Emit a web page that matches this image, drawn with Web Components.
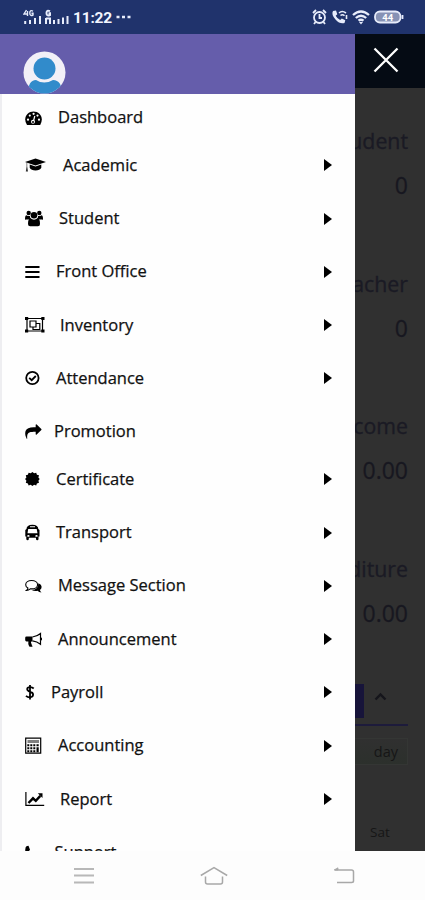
<!DOCTYPE html>
<html lang="en">
<head>
<meta charset="utf-8">
<title>School Menu</title>
<style>
    body {
        margin: 0;
        width: 425px;
        height: 900px;
        overflow: hidden;
        font-family: "Open Sans", "Noto Sans", sans-serif;
    }
</style>
</head>
<body>
<school-app></school-app>

<script>
const icons = {
    dashboard: [17, 16, `<path d="M2 15Q.2 12 .2 9.5C.2 4.6 4 1.4 8.5 1.4s8.3 3.2 8.3 8.1q0 2.7-1.6 5.5z"/><g fill="#fff"><circle cx="3" cy="9.7" r="1.1"/><circle cx="4.8" cy="5.6" r="1.1"/><circle cx="8.6" cy="3.8" r="1.1"/><circle cx="12.5" cy="5.6" r="1.1"/><circle cx="14" cy="9.7" r="1.1"/><circle cx="8" cy="11.8" r="2"/></g><path d="M9.8 6l-1.6 6" stroke="#fff" stroke-width="1.2"/><circle cx="8" cy="12" r="1"/>`],
    academic: [21, 16, `<path d="M10.5 1.5L21 5 10.5 8.5 0 5z"/><path d="M4.7 7.5l5.8 2 5.8-2v3.3q-1.5 2.6-5.8 2.6t-5.8-2.6z"/><path d="M2.2 5.5v4l.8 5H.8l.8-5v-4z" opacity=".8"/>`],
    student: [18, 17, `<circle cx="3.7" cy="3" r="2.2"/><circle cx="14.3" cy="3" r="2.2"/><circle cx="9" cy="5.2" r="3.3"/><path d="M0 9Q0 5.5 1.5 5.2q2 1.2 3.4.8Q5 8 6 9l-2.5.4H1.2Q0 10 0 9zM18 9q0-3.5-1.5-3.8-2 1.2-3.4.8Q13 8 12 9l2.5.4h2.3Q18 10 18 9z"/><path d="M3 14q0-5.5 2.5-5.7Q9 11 12.5 8.3 15 8.500 15 14q0 2.300-2 2.300H5.200Q3 16.300 3 14z"/>`],
    bars: [15, 14, `<path d="M.3 1h14.200v2H.3zm0 5h14.200v2H.3zm0 5h14.200v2H.3z"/>`],
    inventory: [20, 18, `<g fill="none" stroke="#000" stroke-width="1.200"><path d="M2 2.500h15.500v12.500H2z"/><path d="M5 5h6v6H5zM11 7.500h3.800v6H8V11"/></g><path d="M0 1h3.200v3H0zm16.300 0h3.200v3h-3.200zM0 13.500h3.200v3H0zm16.300 0h3.200v3h-3.200z"/>`],
    attendance: [15, 16, `<g fill="none" stroke="#000" stroke-width="1.800"><circle cx="7.400" cy="8" r="6.200"/><path d="M4.200 7.800l2.500 2.400 4.100-4.200"/></g>`],
    promotion: [17, 16, `<path transform="translate(.2 -.3) scale(.0091)" d="M1792 640q0 26-19 45l-512 512q-19 19-45 19t-45-19-19-45v-256h-224q-98 0-175.500 6t-154 21.500-133 42.500-105.500 69.500-80 101-48.500 138.500-17.500 181q0 55 5 123 0 6 2.500 23.500t2.500 26.500q0 15-8.500 25t-23.500 10q-16 0-28-17-7-9-13-22t-13.500-30-10.500-24q-127-285-127-451 0-199 53-333 162-403 875-403h224v-256q0-26 19-45t45-19 45 19l512 512q19 19 19 45z"/>`],
    certificate: [15, 16, `<path d="M7.400 1l1.700 1.300 2.100-.6.700 2 2.100.6-.6 2.100L14.700 8l-1.300 1.700.6 2.100-2.100.600-.700 2-2.100-.600L7.400 15l-1.700-1.200-2.100.6-.700-2-2.100-.600.600-2.100L.1 8l1.300-1.600-.600-2.100 2.100-.600.700-2 2.100.600z"/>`],
    bus: [15, 17, `<path fill-rule="evenodd" d="M1.500 5Q1.500 1 7.400.8q5.900.2 5.900 4.200l1.200 1v6.500h-1V15q0 1.200-1.200 1.200T11 15v-1.200H3.800V15q0 1.200-1.200 1.200T1.300 15v-2.500h-1V6zM5 2.300v1h5v-1zM3.200 5L2.500 9.300h10L11.700 5zM3.400 11q-1.200 0-1.200.9t1.200.9 1.200-.9-1.200-.9zm8.100 0q-1.200 0-1.200.9t1.200.9 1.200-.9-1.200-.9z"/>`],
    message: [17, 16, `<path d="M6.600 2.500c3.300 0 6 1.700 6 4.200s-2.700 4.200-6 4.200l-1.300-.1q-1.700 1.500-3.800 1.600 1.300-1 1.400-2.300Q.7 8.900.7 6.700c0-2.500 2.600-4.200 5.900-4.200z" fill="none" stroke="#000" stroke-width="1.100"/><path d="M13.300 5.200q3.300 1.300 3.300 3.800 0 1.800-1.700 3 .2 1.300 1.600 2.400-2.500 0-4-1.600-3.300.6-5.800-.8 6.900-.3 6.600-6.800z"/>`],
    announcement: [17, 17, `<path d="M1.500 5.400h6v5H6.200q-.7 1.500.5 2.700-.600.900 1 2.200-1.300 1-3.500.1-1.400-3-.8-5H1.500Q.200 10.400.200 9V6.800q0-1.400 1.300-1.400z"/><path d="M7.500 6q4.500-.5 8-3.500v10.800q-3.500-3-8-3.500M15.300 6.500q1.200.2 1.200 1.400t-1.200 1.500" fill="none" stroke="#000" stroke-width="1.200"/>`],
    dollar: [11, 17, `<path d="M8.700 4.500Q7.200 3 5 3.100 2.300 3.200 2.200 5q0 1.800 2.800 2.700 3.200 1 3.100 3.100-.2 2.400-3.200 2.500-2.400 0-3.900-1.500M5 1v14.500" fill="none" stroke="#000" stroke-width="1.800"/>`],
    calculator: [17, 18, `<path d="M.7 1.200h15v15H.7z" fill="none" stroke="#000" stroke-width="1.200"/><path d="M2.500 3h11.500v3H2.500z" opacity=".5"/><path d="M2.300 7.200h2v2h-2zm3 0h2v2h-2zm3 0h2v2h-2zm3.200 0h2.200v2h-2.200zm-9.200 3h2v2h-2zm3 0h2v2h-2zm3 0h2v2h-2zm3.200 0h2.200v5h-2.200zm-9.200 3h2v2h-2zm3 0h2v2h-2zm3 0h2v2h-2z"/>`],
    chart: [20, 16, `<path d="M.900 1v13.400h18.300" fill="none" stroke="#000" stroke-width="1.200"/><path d="M3.500 12L8 7.300l2.800 2.600 4.500-5" fill="none" stroke="#000" stroke-width="2.400"/><path d="M12.800 2.200h4.700V7z"/>`],
    phone: [14, 15, `<path d="M3.500.8l1.500 4-1.300 1.600q1.500 3.200 4.600 4.700L10 9.200l3.700 2q-.3 3.100-3.200 3.100Q6.500 14 3 10.300T.4 4Q.3 1 3.500.8z"/>`]
};

const svg = (name) => {
    const [w, h, body] = icons[name];
    return `<svg width="${w}" height="${h}" viewBox="0 0 ${w} ${h}">${body}</svg>`;
};

class StatusBar extends HTMLElement {
    connectedCallback() {
        this.attachShadow({ mode: 'open' }).innerHTML = `
            <style>
                :host {
                    display: flex;
                    align-items: center;
                    box-sizing: border-box;
                    height: 34px;
                    padding: 0 21px 0 23px;
                    background: #20336c;
                    color: #f3f6ff;
                    font: 700 15.500px Roboto, sans-serif;
                }
                svg { display: block; fill: none; stroke: #e7ecfb; }
                .time { margin: 1px 4px 0 4px; letter-spacing: -.2px; }
                .right { display: flex; align-items: center; gap: 4px; margin-left: auto; }
            </style>
            <svg width="46" height="16" viewBox="0 0 46 16" stroke-width="2">
                <path d="M3.500 1L1 5h4M4.500 2v5" stroke-width="1.400"/>
                <path d="M10 2.200Q6.800.5 6.800 4T10 6V4.200H8.500" stroke-width="1.400"/>
                <path d="M2.200 12v3M7 11v4M12 9v6M17 7v8"/>
                <path d="M27 2.200Q23.500.5 23.500 4T27 6V4.200h-1.500M23 9.500h5M23 15V9M27 15v-5M31 11v4M35.500 10v5M40 8.500V15M44.500 7v8"/>
            </svg>
            <span class="time">11:22</span>
            <svg width="15" height="4" viewBox="0 0 15 4"><path d="M.5 2h3M6 2h3M11.500 2h3" stroke-width="2.400"/></svg>
            <div class="right">
                <svg width="15" height="16" viewBox="0 0 15 16" stroke-width="1.800"><circle cx="7.500" cy="8.500" r="5.500"/><path d="M7.500 5v4H10M1 4l3-3M14 4l-3-3M3.500 13L2 15M11.500 13l1.500 2"/></svg>
                <svg width="17" height="16" viewBox="0 0 17 16"><path d="M2 2l3-.5 1.300 3.700-1.600 1.500q1.500 3 4.500 4.300l1.600-1.500 3.500 1.700-.8 2.800Q9 15.500 4.500 10.500T2 2z" fill="#e7ecfb" stroke="none"/><path d="M8 4q3-3 7 0M9.500 6.500q2-1.700 4 .3M15.500 6v4" stroke-width="1.600"/></svg>
                <svg width="18" height="15" viewBox="0 0 18 15" stroke-width="2.300"><path d="M1 5q8-7 16 0M3.800 8q5.200-4.500 10.400 0M6.500 10.700q2.500-2 5 0"/><path d="M7 12h4l-2 2.500z" fill="#e7ecfb" stroke="none"/></svg>
                <svg width="30" height="14" viewBox="0 0 30 14"><rect x="1" y="1.500" width="25.500" height="11" rx="5" fill="#8792b5" stroke-width="1.800"/><path d="M28.500 5v4" stroke-width="1.800"/><text x="13.800" y="10.500" text-anchor="middle" font-family="Roboto" font-size="9.500" font-weight="700" fill="#fff" stroke="none">44</text></svg>
            </div>
        `;
    }
}

class MenuItem extends HTMLElement {
    connectedCallback() {
        // data-lead is the width of the icon column, it differs from row to row
        this.attachShadow({ mode: 'open' }).innerHTML = `
            <style>
                :host {
                    display: flex;
                    align-items: center;
                    flex: none;
                    box-sizing: border-box;
                    height: 47.500px;
                    padding: 0 23px 0 25px;
                    color: #111;
                    font-size: 16.500px;
                    white-space: nowrap;
                    -webkit-text-stroke: .25px #111;
                }
                :host([data-sub]) { margin-bottom: 5.800px; }
                .icon { flex: none; width: ${this.dataset.lead}px; }
                .label { padding-bottom: 2px; }
                svg { display: block; }
                .arrow {
                    margin-left: auto;
                    border-left: 8px solid #000;
                    border-top: 6.500px solid transparent;
                    border-bottom: 6.500px solid transparent;
                }
            </style>
            <span class="icon">${svg(this.dataset.icon)}</span>
            <span class="label"><slot></slot></span>
            ${this.hasAttribute('data-sub') ? '<span class="arrow"></span>' : ''}
        `;
    }
}

class SideDrawer extends HTMLElement {
    connectedCallback() {
        this.attachShadow({ mode: 'open' }).innerHTML = `
            <style>
                :host {
                    display: flex;
                    flex-direction: column;
                    box-sizing: border-box;
                    background: #fefefe;
                    overflow: hidden;
                }
                header {
                    flex: none;
                    height: 60px;
                    box-sizing: border-box;
                    padding: 17px 0 0 23px;
                    background: #655dab;
                    overflow: hidden;
                }
                header svg { display: block; }
                nav {
                    display: flex;
                    flex: 1;
                    flex-direction: column;
                    min-height: 0;
                    border-left: 2px solid #eeeef1;
                    overflow: hidden;
                }
                ::slotted(menu-item) { margin-left: -2px; }
            </style>
            <header>
                <svg width="43" height="43" viewBox="0 0 43 43">
                    <clipPath id="round"><circle cx="21.500" cy="21.500" r="21"/></clipPath>
                    <g clip-path="url(#round)">
                        <path d="M0 0h43v43H0z" fill="#f2f0f7"/>
                        <path d="M5 43q0-14 8-14 8 5 17 0 9 0 9 14z" fill="#318bcb"/>
                        <circle cx="21.500" cy="17.500" r="13.500" fill="#f2f0f7"/>
                        <circle cx="21.500" cy="17.500" r="11" fill="#318bcb"/>
                    </g>
                </svg>
            </header>
            <nav><slot></slot></nav>
        `;
    }
}

class StatCard extends HTMLElement {
    connectedCallback() {
        this.attachShadow({ mode: 'open' }).innerHTML = `
            <style>
                :host {
                    display: flex;
                    flex: none;
                    flex-direction: column;
                    align-items: flex-end;
                    height: 142.700px;
                    color: #1a1a24;
                    font-size: 21.300px;
                    line-height: 44px;
                    -webkit-text-stroke: .3px #1a1a24;
                }
                .value { font-size: 23px; color: #17171f; }
            </style>
            <slot></slot>
            <span class="value">${this.dataset.value}</span>
        `;
    }
}

class DimmedPage extends HTMLElement {
    connectedCallback() {
        this.attachShadow({ mode: 'open' }).innerHTML = `
            <style>
                :host {
                    display: flex;
                    flex-direction: column;
                    background: #303030;
                    overflow: hidden;
                    white-space: nowrap;
                }
                .top {
                    display: flex;
                    flex: none;
                    justify-content: center;
                    align-items: center;
                    height: 54px;
                    box-sizing: border-box;
                    padding: 0 8px 2px 0;
                    background: #050b14;
                }
                .cards {
                    display: flex;
                    flex-direction: column;
                    align-items: flex-end;
                    flex: none;
                    height: 596px;
                    box-sizing: border-box;
                    padding: 31px 17px 0 0;
                }
                .panel {
                    display: flex;
                    flex: none;
                    height: 42px;
                    box-sizing: border-box;
                    margin-right: 17px;
                    border-bottom: 2px solid #1d1b3b;
                }
                .tab { width: 9px; height: 34px; background: #17143a; }
                .panel svg { margin: 8px 0 0 10px; }
                .day {
                    flex: none;
                    height: 27px;
                    margin: 12px 17px 0 0;
                    padding-right: 9px;
                    box-sizing: border-box;
                    border: 1px solid #343634;
                    border-left: 0;
                    background: linear-gradient(#303030, #2c302c);
                    color: #161616;
                    font-size: 14.500px;
                    line-height: 25px;
                    text-align: right;
                }
                .sat { margin: 57px 0 0 15px; color: #161616; font-size: 13.500px; line-height: 20px; }
            </style>
            <div class="top">
                <svg width="26" height="26" viewBox="0 0 26 26"><path d="M1.500 1.500l23 23M24.500 1.500l-23 23" stroke="#fff" stroke-width="2.300"/></svg>
            </div>
            <div class="cards"><slot></slot></div>
            <div class="panel">
                <div class="tab"></div>
                <svg width="13" height="9" viewBox="0 0 13 9"><path d="M1.500 7.500l5-5 5 5" fill="none" stroke="#15151b" stroke-width="2.400"/></svg>
            </div>
            <div class="day">day</div>
            <div class="sat">Sat</div>
        `;
    }
}

class NavKeys extends HTMLElement {
    connectedCallback() {
        this.attachShadow({ mode: 'open' }).innerHTML = `
            <style>
                :host {
                    display: grid;
                    grid-template-columns: repeat(3, 130px);
                    justify-content: center;
                    justify-items: center;
                    align-items: center;
                    box-sizing: border-box;
                    height: 49px;
                    padding-left: 2px;
                    background: #fdfdfd;
                }
                svg { display: block; fill: none; stroke: #a8a8a8; stroke-width: 1.500; }
            </style>
            <svg width="20" height="18" viewBox="0 0 20 18"><path d="M0 2h20M0 8.500h20M0 15.500h20" stroke="#b8b8b8" stroke-width="2"/></svg>
            <svg width="28" height="20" viewBox="0 0 28 20"><path d="M.8 9.500L14 1.700l13.200 7.800M5.500 10.500v5.500q0 2 2 2h13q2 0 2-2v-5.500"/></svg>
            <svg width="22" height="18" viewBox="0 0 22 18"><path d="M2 3h16.500q2 0 2 2v9q0 1.500-2 1.500H4"/><path d="M5 .8v2.200H1z" fill="#a8a8a8" stroke-width=".8"/></svg>
        `;
    }
}

class SchoolApp extends HTMLElement {
    connectedCallback() {
        this.attachShadow({ mode: 'open' }).innerHTML = `
            <style>
                :host { display: block; width: 425px; height: 900px; }
                main {
                    display: grid;
                    grid-template-columns: 355px 70px;
                    height: 817px;
                }
                side-drawer, dimmed-page { min-height: 0; }
            </style>
            <status-bar></status-bar>
            <main>
                <side-drawer>
                    <menu-item data-icon="dashboard" data-lead="33">Dashboard</menu-item>
                    <menu-item data-icon="academic" data-lead="38" data-sub>Academic</menu-item>
                    <menu-item data-icon="student" data-lead="34" data-sub>Student</menu-item>
                    <menu-item data-icon="bars" data-lead="31" data-sub>Front Office</menu-item>
                    <menu-item data-icon="inventory" data-lead="35" data-sub>Inventory</menu-item>
                    <menu-item data-icon="attendance" data-lead="31" data-sub>Attendance</menu-item>
                    <menu-item data-icon="promotion" data-lead="29">Promotion</menu-item>
                    <menu-item data-icon="certificate" data-lead="31" data-sub>Certificate</menu-item>
                    <menu-item data-icon="bus" data-lead="31" data-sub>Transport</menu-item>
                    <menu-item data-icon="message" data-lead="33" data-sub>Message Section</menu-item>
                    <menu-item data-icon="announcement" data-lead="33" data-sub>Announcement</menu-item>
                    <menu-item data-icon="dollar" data-lead="26" data-sub>Payroll</menu-item>
                    <menu-item data-icon="calculator" data-lead="33" data-sub>Accounting</menu-item>
                    <menu-item data-icon="chart" data-lead="35" data-sub>Report</menu-item>
                    <menu-item data-icon="phone" data-lead="29.500">Support</menu-item>
                </side-drawer>
                <dimmed-page>
                    <stat-card data-value="0">udent</stat-card>
                    <stat-card data-value="0">acher</stat-card>
                    <stat-card data-value="0.00">come</stat-card>
                    <stat-card data-value="0.00">diture</stat-card>
                </dimmed-page>
            </main>
            <nav-keys></nav-keys>
        `;
    }
}

customElements.define('status-bar', StatusBar);
customElements.define('menu-item', MenuItem);
customElements.define('side-drawer', SideDrawer);
customElements.define('stat-card', StatCard);
customElements.define('dimmed-page', DimmedPage);
customElements.define('nav-keys', NavKeys);
customElements.define('school-app', SchoolApp);
</script>
</body>
</html>
